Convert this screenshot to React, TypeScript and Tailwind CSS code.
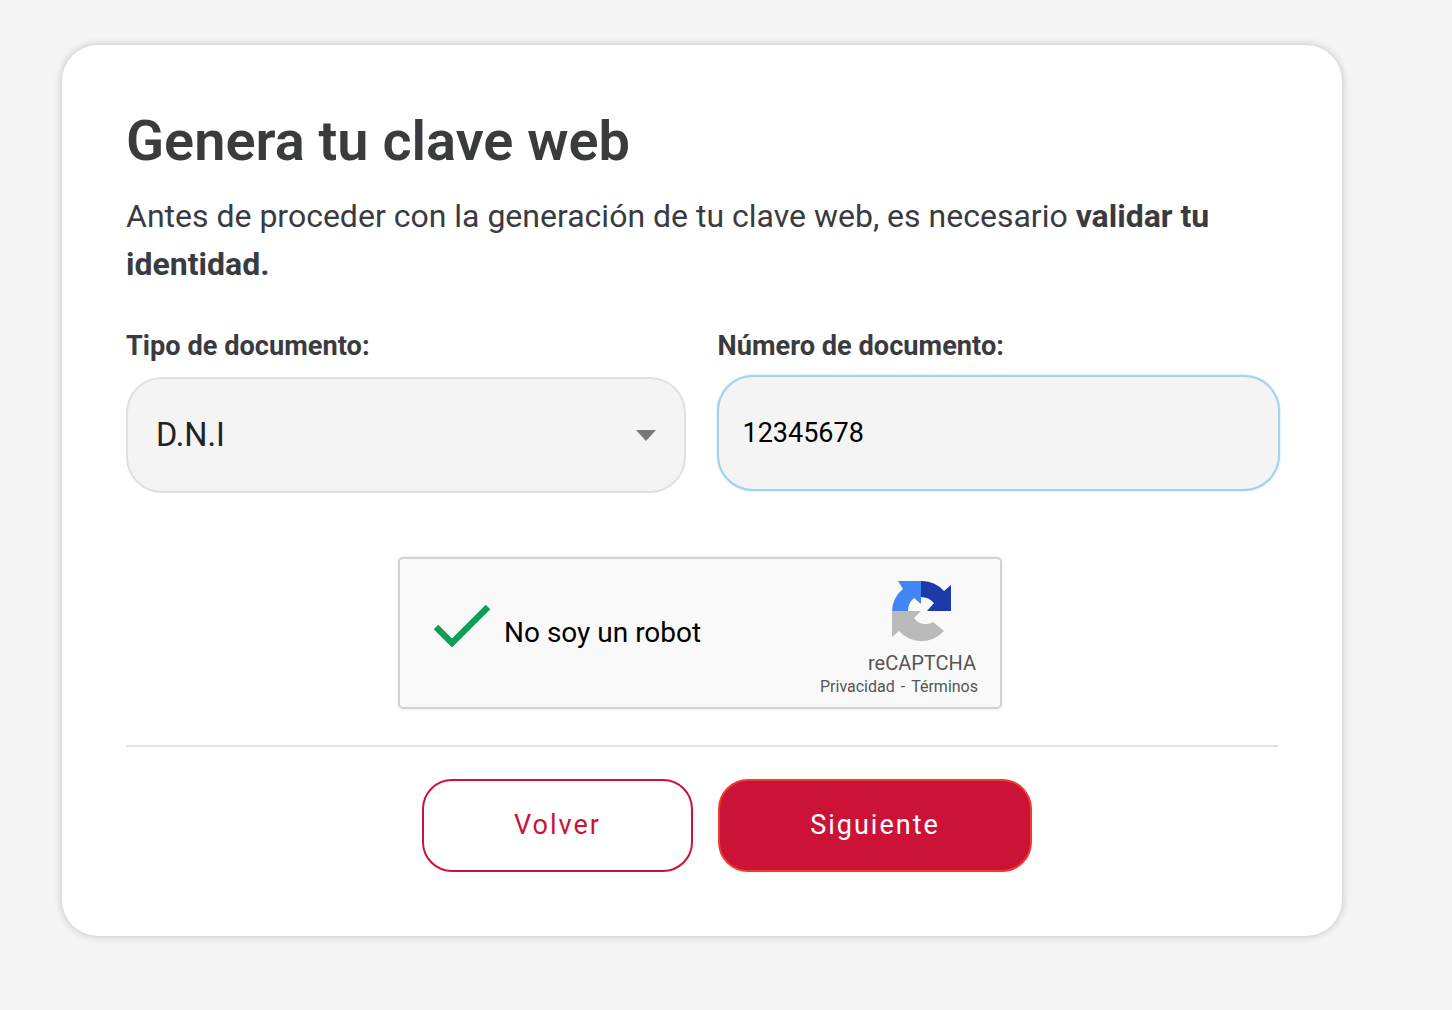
export default function App() {
  return (
    <div className="min-h-[1010px] bg-[#f5f5f5] pt-[45px] pl-[62px] font-['Roboto',sans-serif]">
      <div className="w-[1280px] h-[891px] bg-white rounded-[36px] shadow-[0_0_8px_rgba(0,0,0,0.22)] pt-[62px] pl-[64px] pr-[62px] text-[#3a3b3f]">
        <h1 className="text-[55.9px] leading-[68px] font-semibold">Genera tu clave web</h1>
        <p className="mt-[18px] text-[32px] leading-[47.5px]">
          Antes de proceder con la generación de tu clave web, es necesario <b className="font-bold">validar tu identidad.</b>
        </p>

        <div className="mt-[38px] flex gap-[31px]">
          <div className="w-[560px]">
            <label className="block text-[27.2px] leading-[40px] font-bold">Tipo de documento:</label>
            <div className="mt-[11px] h-[116px] bg-[#f4f4f4] border-2 border-[#e0e0e0] rounded-[36px] flex items-center justify-between pl-[28px] pr-[28px] text-[32.5px] text-[#222]">
              <span>D.N.I</span>
              <span className="w-0 h-0 border-x-[10px] border-x-transparent border-t-[11px] border-t-[#777]" />
            </div>
          </div>
          <div className="w-[564px]">
            <label className="block ml-[1px] text-[27.2px] leading-[40px] font-bold">Número de documento:</label>
            <div className="mt-[9px] h-[116px] bg-[#f4f4f4] border-2 border-[#a3d3ec] shadow-[0_0_2px_#a3d3ec] rounded-[36px] flex items-center pl-[24px] text-[27px] text-black">
              12345678
            </div>
          </div>
        </div>

        <div className="mt-[64px] flex justify-center pr-[6px]">
          <div className="w-[604px] h-[152px] bg-[#f9f9f9] border-2 border-[#d3d3d3] rounded-[5px] shadow-[0_0_4px_rgba(0,0,0,0.08)] flex items-center relative">
            <svg className="ml-[33px] mt-[-14px]" width="58" height="46" viewBox="0 0 58 46">
              <path d="M3 24 L19 40 L55 4" fill="none" stroke="#0f9d58" strokeWidth="6.5" />
            </svg>
            <span className="ml-[13px] text-[28px] text-black">No soy un robot</span>
            <div className="ml-auto mr-[22px] mt-[11px] flex flex-col items-end">
              <svg className="mr-[26px]" width="60" height="61" viewBox="0 0 60 61">
                <path d="M29 0 A30 30 0 0 1 52 10 L59 4 V30 H35 L42 22 A17 17 0 0 0 29 16 Z" fill="#1c3aa9" />
                <path d="M29 0 V23 L22 17 A17 17 0 0 0 16 30 H0 A30 30 0 0 1 11 8 L6 0 Z" fill="#4285f4" />
                <path d="M0 30 H29 L22 37 A14 14 0 0 0 41 41 L52 50 A30 30 0 0 1 7 50 L0 56 Z" fill="#bababa" />
              </svg>
              <span className="mt-[7px] mr-[2px] text-[20px] leading-[28px] text-[#555]">reCAPTCHA</span>
              <span className="text-[16px] leading-[20px] text-[#555] whitespace-nowrap">
                Privacidad<span className="mx-[6px]">-</span>Términos
              </span>
            </div>
          </div>
        </div>

        <div className="mt-[36px] mr-[2px] h-[2px] bg-[#e3e3e3]" />

        <div className="mt-[32px] flex justify-center gap-[25px] pl-[48px]">
          <button className="w-[271px] h-[93px] rounded-[30px] border-2 border-[#cc1337] bg-white text-[#cc1337] text-[27px] tracking-[2px]">Volver</button>
          <button className="w-[314px] h-[93px] rounded-[30px] border-2 border-[#f03c2e] bg-[#cc1337] text-white text-[27px] tracking-[2px]">Siguiente</button>
        </div>
      </div>
    </div>
  )
}
